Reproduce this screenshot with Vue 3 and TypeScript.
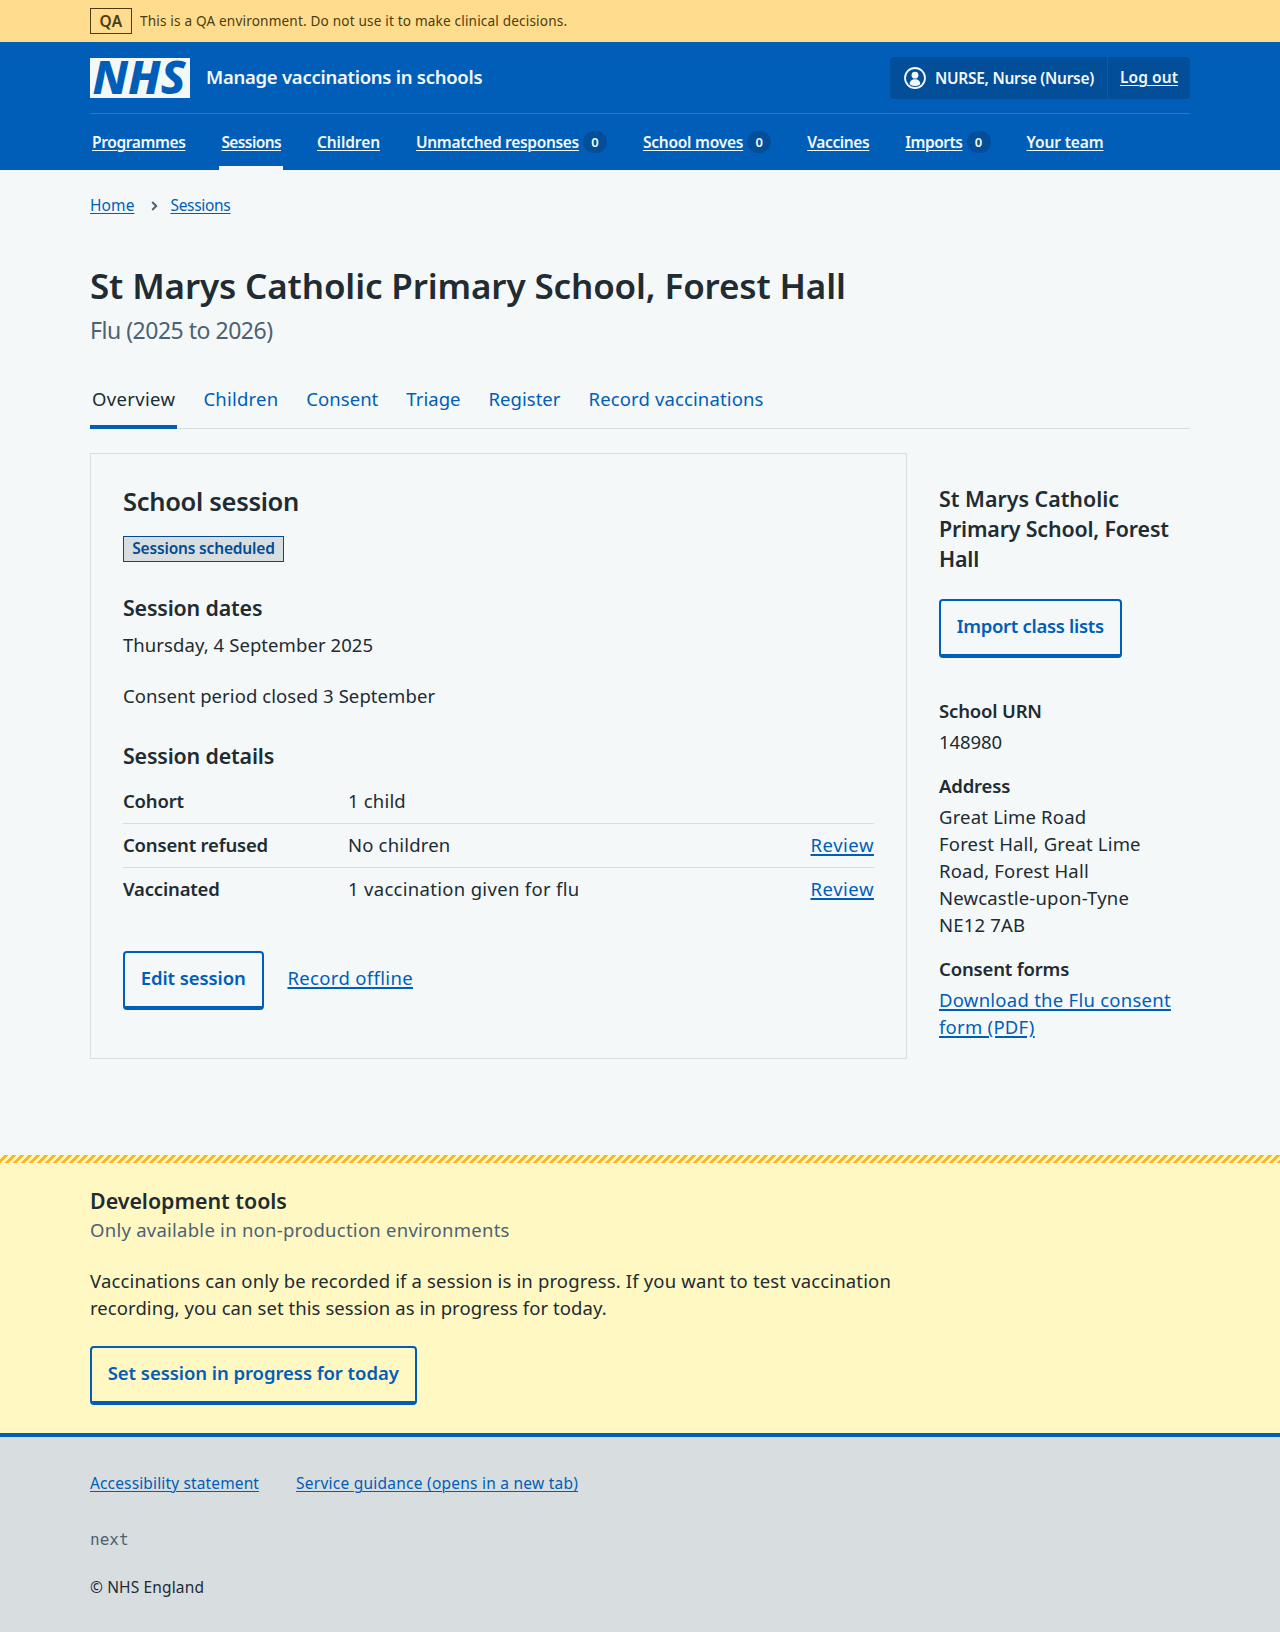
<script setup lang="ts">
interface NavItem { label: string; count?: number; current?: boolean }
interface SummaryRow { key: string; value: string; action?: string }

const navItems: NavItem[] = [
  { label: 'Programmes' },
  { label: 'Sessions', current: true },
  { label: 'Children' },
  { label: 'Unmatched responses', count: 0 },
  { label: 'School moves', count: 0 },
  { label: 'Vaccines' },
  { label: 'Imports', count: 0 },
  { label: 'Your team' },
]

const tabs: string[] = ['Overview', 'Children', 'Consent', 'Triage', 'Register', 'Record vaccinations']

const rows: SummaryRow[] = [
  { key: 'Cohort', value: '1 child' },
  { key: 'Consent refused', value: 'No children', action: 'Review' },
  { key: 'Vaccinated', value: '1 vaccination given for flu', action: 'Review' },
]
</script>

<template>
  <div class="page">
    <div class="env">
      <div class="container env-row">
        <strong class="env-tag">QA</strong>
        <span>This is a QA environment. Do not use it to make clinical decisions.</span>
      </div>
    </div>

    <header class="header">
      <div class="container">
        <div class="header-top">
          <svg class="logo" width="100" height="40" viewBox="0 0 100 40" role="img" aria-label="NHS">
            <rect width="100" height="40" fill="#f4f8f9" />
            <text x="2.5" y="36.3" textLength="93" lengthAdjust="spacingAndGlyphs">NHS</text>
          </svg>
          <a class="service">Manage vaccinations in schools</a>
          <div class="account">
            <span class="account-user">
              <svg width="22" height="22" viewBox="0 0 22 22" aria-hidden="true">
                <circle cx="11" cy="11" r="10" fill="none" stroke="#f4f8f9" stroke-width="1.8" />
                <circle cx="11" cy="8.2" r="3.4" fill="#f4f8f9" />
                <path d="M11 12.2c3.2 0 5.3 1.9 5.3 4.5 0 .9-2.2 2.3-5.3 2.3s-5.3-1.4-5.3-2.3c0-2.6 2.1-4.5 5.3-4.5z" fill="#f4f8f9" />
              </svg>
              <span class="user-name">NURSE, Nurse (Nurse)</span>
            </span>
            <span class="account-out"><a>Log out</a></span>
          </div>
        </div>
        <nav class="nav">
          <div v-for="item in navItems" :key="item.label" class="nav-item" :class="{ current: item.current }">
            <a>{{ item.label }}</a>
            <span v-if="item.count !== undefined" class="count">{{ item.count }}</span>
          </div>
        </nav>
      </div>
    </header>

    <div class="container">
      <div class="crumbs">
        <a>Home</a>
        <svg width="7" height="10" viewBox="0 0 7 10" aria-hidden="true">
          <path d="M1.2 1l4 4-4 4" fill="none" stroke="#4c6272" stroke-width="2" />
        </svg>
        <a class="crumb-last">Sessions</a>
      </div>

      <h1>St Marys Catholic Primary School, Forest Hall</h1>
      <p class="caption">Flu (2025 to 2026)</p>

      <nav class="tabs">
        <a v-for="(tab, i) in tabs" :key="tab" class="tab" :class="{ selected: i === 0 }">{{ tab }}</a>
      </nav>

      <div class="columns">
        <main class="card">
          <h2>School session</h2>
          <strong class="tag">Sessions scheduled</strong>
          <h3>Session dates</h3>
          <p class="dates">Thursday, 4 September 2025</p>
          <p class="period">Consent period closed 3 September</p>
          <h3 class="details">Session details</h3>
          <dl class="summary">
            <div v-for="row in rows" :key="row.key" class="row">
              <dt>{{ row.key }}</dt>
              <dd>{{ row.value }}</dd>
              <dd v-if="row.action" class="action"><a class="link">{{ row.action }}</a></dd>
            </div>
          </dl>
          <div class="actions">
            <button class="btn edit">Edit session</button>
            <a class="link offline">Record offline</a>
          </div>
        </main>

        <aside class="side">
          <h3><span class="first-line">St Marys Catholic</span><br />Primary School, Forest<br />Hall</h3>
          <button class="btn import">Import class lists</button>
          <h4>School URN</h4>
          <p class="urn">148980</p>
          <h4>Address</h4>
          <p>Great Lime Road<br />Forest Hall, Great Lime<br />Road, Forest Hall<br />Newcastle-upon-Tyne<br />NE12 7AB</p>
          <h4>Consent forms</h4>
          <p><a class="link download">Download the Flu consent<br />form (PDF)</a></p>
        </aside>
      </div>
    </div>

    <section class="dev">
      <div class="container">
        <h3>Development tools</h3>
        <p class="dev-caption">Only available in non-production environments</p>
        <p class="dev-text">Vaccinations can only be recorded if a session is in progress. If you want to test vaccination<br /><span class="dev-last">recording, you can set this session as in progress for today.</span></p>
        <button class="btn today">Set session in progress for today</button>
      </div>
    </section>

    <footer class="footer">
      <div class="container">
        <div class="footer-links">
          <a>Accessibility statement</a>
          <a class="guidance">Service guidance (opens in a new tab)</a>
        </div>
        <p class="version">next</p>
        <p class="copyright">© NHS England</p>
      </div>
    </footer>
  </div>
</template>

<style>
body {
  background: #d8dde0;
}
</style>

<style scoped>
.page {
  width: 1280px;
  min-height: 1632px;
  background: #f4f8f9;
  color: #212b32;
  font: 400 18.5px/27px 'Noto Sans', 'Open Sans', sans-serif;
  letter-spacing: 0.01em;
}
.page * { box-sizing: border-box; }
.container { width: 1100px; margin: 0 auto; }
h1, h2, h3, h4, p, dl, dd { margin: 0; }

/* environment banner */
.env { height: 42px; background: #ffdc8e; color: #4d3c0e; }
.env-row {
  display: flex;
  align-items: center;
  height: 42px;
  gap: 8px;
  font-size: 13.6px;
  line-height: 20px;
  letter-spacing: 0.0125em;
}
.env-tag {
  width: 42px;
  height: 26px;
  border: 1px solid #4d3c0e;
  text-align: center;
  font-size: 15.5px;
  font-weight: 600;
  line-height: 24px;
  letter-spacing: 0.03em;
}

/* header */
.header { height: 128px; background: #005eb8; color: #f4f8f9; }
.header-top {
  display: flex;
  align-items: flex-start;
  height: 72px;
  padding-top: 15px;
  border-bottom: 1px solid #2b78c5;
}
.logo { display: block; margin-top: 1px; overflow: visible; }
.logo text { font: italic 800 46px 'Noto Sans', sans-serif; fill: #005eb8; letter-spacing: 0; }
.service { margin: 6px 0 0 16px; font-size: 18.5px; font-weight: 600; letter-spacing: -0.0145em; }
.account {
  display: flex;
  align-items: stretch;
  width: 300px;
  height: 42px;
  margin-left: auto;
  border-radius: 4px;
  background: #034e98;
  font-size: 15.5px;
  font-weight: 600;
  line-height: 24px;
}
.account-user {
  display: flex;
  align-items: center;
  width: 218px;
  padding-left: 14px;
  border-right: 1px solid #005eb8;
}
.user-name { margin: -1px 0 0 9px; letter-spacing: -0.0183em; white-space: nowrap; }
.account-out { padding: 8px 0 0 12px; letter-spacing: 0.005em; }
.account-out a, .nav a { text-decoration: underline; text-decoration-thickness: 1px; text-underline-offset: 2px; }
.nav { display: flex; gap: 32px; height: 56px; }
.nav-item {
  display: flex;
  align-items: center;
  padding: 0 2px 1px;
  font-size: 15.5px;
  font-weight: 600;
  line-height: 24px;
  letter-spacing: -0.024em;
  white-space: nowrap;
}
.nav-item.current { letter-spacing: -0.039em; box-shadow: inset 0 -4px #f4f8f9; }
.nav-item:nth-child(3) { letter-spacing: -0.005em; }
.nav-item:nth-child(4) { letter-spacing: -0.02em; }
.nav-item:nth-child(5) { letter-spacing: -0.015em; }
.nav-item:nth-child(7) { letter-spacing: -0.031em; }
.nav-item:nth-child(8) { letter-spacing: -0.008em; }
.count {
  width: 24px;
  height: 22px;
  margin-left: 4px;
  border-radius: 11px;
  background: #034e98;
  font-size: 13px;
  line-height: 22px;
  letter-spacing: 0;
  text-align: center;
}

/* page heading */
.crumbs {
  display: flex;
  align-items: center;
  padding-top: 23px;
  font-size: 15.5px;
  line-height: 24px;
  letter-spacing: 0.006em;
}
.crumbs a, .footer-links a {
  color: #005eb8;
  text-decoration: underline;
  text-decoration-thickness: 1px;
  text-underline-offset: 2px;
}
.crumbs svg { margin: 1px 12px 0 17px; }
.crumb-last { letter-spacing: -0.02em; }
h1 { padding-top: 45px; font-size: 35px; font-weight: 600; line-height: 48px; letter-spacing: -0.0038em; }
.caption { padding-top: 2px; font-size: 23px; line-height: 36px; letter-spacing: -0.021em; color: #4c6272; }

.tabs {
  display: flex;
  gap: 24px;
  height: 81px;
  padding-top: 37px;
  border-bottom: 1px solid #d8dde0;
  color: #005eb8;
}
.tab { height: 44px; padding: 0 2px; letter-spacing: 0.002em; }
.tab.selected { letter-spacing: 0.018em; color: #212b32; box-shadow: inset 0 -4px #005eb8; }
.tab:nth-child(2) { letter-spacing: 0.012em; }
.tab:nth-child(6) { letter-spacing: 0.007em; }

/* content */
.columns { display: flex; gap: 32px; padding-top: 24px; }
.card { width: 817px; height: 606px; padding: 29px 32px; border: 1px solid #d8dde0; }
h2 { font-size: 25.5px; font-weight: 600; line-height: 36px; letter-spacing: -0.012em; }
h3 { font-size: 21.4px; font-weight: 600; line-height: 30px; letter-spacing: -0.008em; }
h4 { padding-top: 17px; font-size: 18.5px; font-weight: 600; line-height: 27px; letter-spacing: -0.009em; }
.tag {
  display: block;
  width: 161px;
  height: 26px;
  margin: 17px 0 31px;
  border: 1px solid #004b93;
  background: #d8dde0;
  color: #004b93;
  text-align: center;
  font-size: 15.5px;
  font-weight: 600;
  line-height: 23px;
  letter-spacing: -0.011em;
}
.dates { padding-top: 8px; letter-spacing: 0.004em; }
.period { padding-top: 24px; letter-spacing: 0.004em; }
.details { padding-top: 32px; }
.summary { padding-top: 9px; }
.row { display: flex; height: 44px; padding-top: 7px; border-bottom: 1px solid #d8dde0; }
.row:last-child { border-bottom: 0; }
dt { width: 225px; font-weight: 600; letter-spacing: -0.01em; }
.row:last-child dd { letter-spacing: 0.0165em; }
dd.action, .row:last-child dd.action { margin-left: auto; letter-spacing: 0.028em; }
.link {
  color: #005eb8;
  text-decoration: underline;
  text-decoration-thickness: 1.5px;
  text-underline-offset: 2px;
}
.actions { display: flex; align-items: flex-start; gap: 24px; padding-top: 39px; }
.offline { padding-top: 13px; letter-spacing: 0.018em; }
.btn {
  display: block;
  height: 59px;
  padding: 11px 0 15px;
  border: 2px solid #005eb8;
  border-bottom-width: 4px;
  border-radius: 4px;
  background: transparent;
  color: #005eb8;
  font: 600 18.5px/27px 'Noto Sans', 'Open Sans', sans-serif;
  letter-spacing: -0.005em;
  white-space: nowrap;
}
.edit { width: 140.5px; }
.import { width: 182.5px; margin: 25px 0 22px; letter-spacing: -0.0167em; }
.today { width: 326.5px; margin-top: 25px; letter-spacing: -0.0032em; }

.side { width: 251px; padding-top: 31px; }
.side p { padding-top: 4px; }
.side .urn { letter-spacing: -0.004em; }
.first-line { letter-spacing: 0; }
.download { letter-spacing: 0.014em; }

/* development tools */
.dev {
  height: 278px;
  margin-top: 96px;
  padding-top: 31px;
  background:
    linear-gradient(135deg, #fff7c6 25%, #ffb81c 25% 50%, #fff7c6 50% 75%, #ffb81c 75%) 0 0 / 8px 8px repeat-x,
    #fff8c3;
}
.dev h3 { letter-spacing: -0.001em; }
.dev-caption { color: #4c6272; letter-spacing: 0.0135em; }
.dev-text { padding-top: 24px; letter-spacing: 0.0082em; }
.dev-last { letter-spacing: 0.0037em; }

/* footer */
.footer {
  height: 199px;
  border-top: 4px solid #005eb8;
  background: #d8dde0;
  font-size: 15.5px;
  line-height: 24px;
}
.footer-links { display: flex; gap: 37px; padding-top: 34px; letter-spacing: 0.009em; }
.guidance { letter-spacing: 0.0153em; }
.version { padding-top: 33px; font: 16px/24px 'DejaVu Sans Mono', monospace; letter-spacing: 0; color: #4c6272; }
.copyright { padding-top: 23px; letter-spacing: 0.009em; }
</style>
